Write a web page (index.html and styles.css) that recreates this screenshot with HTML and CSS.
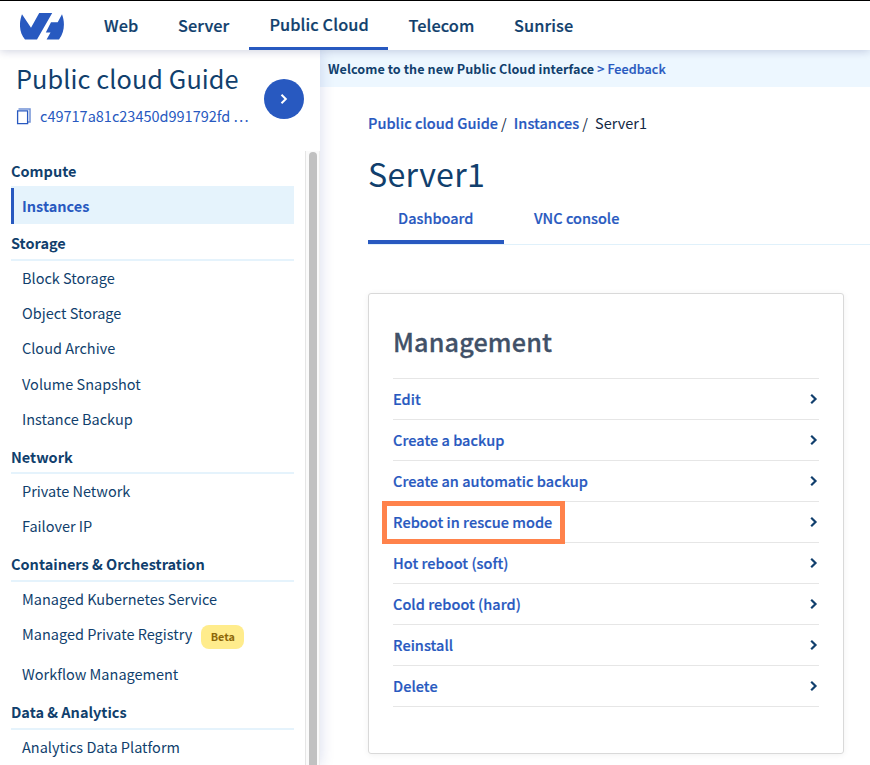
FILE: index.html
```html
<!DOCTYPE html>
<html lang="en">
<head>
<meta charset="utf-8">
<title>Public Cloud - Server1</title>
<link rel="stylesheet" href="styles.css">
</head>
<body>
<header class="topbar">
  <svg class="logo" viewBox="0 0 44 27" width="44" height="27"><path d="M2 1.2 L11 14.8 L19.2 0 H32.2 L17 26.5 H5 C-.8 20 -1.3 10 2 1.2Z"/><path d="M42 1.2 L37.7 9.3 H31 L25.8 19.5 H30.5 L26.6 26.5 H39 C44.8 19 45 9 42 1.2Z"/></svg>
  <nav class="topnav">
    <a class="topnav-link web">Web</a>
    <a class="topnav-link server">Server</a>
    <a class="topnav-link cloud active">Public Cloud</a>
    <a class="topnav-link telecom">Telecom</a>
    <a class="topnav-link sunrise">Sunrise</a>
  </nav>
</header>
<div class="layout">
  <aside class="sidebar">
    <div class="project">
      <div class="project-info">
        <h2 class="project-name">Public cloud Guide</h2>
        <div class="project-id">
          <svg width="15" height="17" viewBox="0 0 15 17"><path class="copy-back" d="M2.5 1H14V14H12"/><path class="copy-front" d="M1.6 2.8H11.6V15.7H1.6Z"/></svg>
          <span>c49717a81c23450d991792fd&thinsp;…</span>
        </div>
      </div>
      <button class="round-btn" aria-label="Expand"><svg width="8" height="10" viewBox="0 0 8 10"><path d="M1.5 .8L5.8 5L1.5 9.2"/></svg></button>
    </div>
    <div class="menu-wrap">
      <nav class="menu">
        <h3 class="low">Compute</h3>
        <a class="selected">Instances</a>
        <h3>Storage</h3>
        <a>Block Storage</a>
        <a>Object Storage</a>
        <a>Cloud Archive</a>
        <a>Volume Snapshot</a>
        <a>Instance Backup</a>
        <h3 class="low">Network</h3>
        <a>Private Network</a>
        <a>Failover IP</a>
        <h3 class="low">Containers &amp; Orchestration</h3>
        <a>Managed Kubernetes Service</a>
        <a class="with-badge">Managed Private Registry<span class="badge">Beta</span></a>
        <a>Workflow Management</a>
        <h3 class="low">Data &amp; Analytics</h3>
        <a>Analytics Data Platform</a>
      </nav>
      <div class="scroll"><div class="thumb"></div></div>
    </div>
  </aside>
  <main class="main">
    <div class="banner"><b>Welcome to the new Public Cloud interface</b><a>&gt; Feedback</a></div>
    <div class="content">
      <div class="crumbs"><a>Public cloud Guide</a><i>/</i><a>Instances</a><i>/</i><span>Server1</span></div>
      <h1>Server1</h1>
      <div class="tabs"><a class="tab current">Dashboard</a><a class="tab">VNC console</a></div>
      <section class="card">
        <h2>Management</h2>
        <ul class="actions">
          <li><a>Edit</a><svg width="8" height="10" viewBox="0 0 8 10"><path d="M1.2 .8L5.5 5L1.2 9.2"/></svg></li>
          <li><a>Create a backup</a><svg width="8" height="10" viewBox="0 0 8 10"><path d="M1.2 .8L5.5 5L1.2 9.2"/></svg></li>
          <li><a>Create an automatic backup</a><svg width="8" height="10" viewBox="0 0 8 10"><path d="M1.2 .8L5.5 5L1.2 9.2"/></svg></li>
          <li class="marked"><a>Reboot in rescue mode</a><svg width="8" height="10" viewBox="0 0 8 10"><path d="M1.2 .8L5.5 5L1.2 9.2"/></svg></li>
          <li><a>Hot reboot (soft)</a><svg width="8" height="10" viewBox="0 0 8 10"><path d="M1.2 .8L5.5 5L1.2 9.2"/></svg></li>
          <li><a>Cold reboot (hard)</a><svg width="8" height="10" viewBox="0 0 8 10"><path d="M1.2 .8L5.5 5L1.2 9.2"/></svg></li>
          <li><a>Reinstall</a><svg width="8" height="10" viewBox="0 0 8 10"><path d="M1.2 .8L5.5 5L1.2 9.2"/></svg></li>
          <li><a>Delete</a><svg width="8" height="10" viewBox="0 0 8 10"><path d="M1.2 .8L5.5 5L1.2 9.2"/></svg></li>
        </ul>
      </section>
    </div>
  </main>
</div>
</body>
</html>
```
FILE: styles.css
```css
*, *::after { box-sizing: border-box; }
body {
  margin: 0;
  height: 765px;
  overflow: hidden;
  display: flex;
  flex-direction: column;
  background: #fff;
  color: #113f6d;
  font-family: "Noto Sans CJK SC", "Noto Sans", sans-serif;
  font-size: 14.5px;
  white-space: nowrap;
}
h1, h2, h3, ul { margin: 0; padding: 0; }
.topbar {
  position: relative;
  z-index: 2;
  flex: none;
  height: 50px;
  border-top: 1px solid #000;
  display: flex;
  background: #fff;
  box-shadow: 0 1px 9px rgba(0, 20, 90, .2);
}
.logo { margin: 12px 0 0 20px; fill: #2859c0; }
.topnav { display: flex; margin-left: 25px; }
.topnav-link {
  height: 49px;
  padding: 0 15px;
  line-height: 49px;
  font-size: 16.3px;
  font-weight: 500;
  letter-spacing: .1px;
  -webkit-text-stroke: .2px;
}
.web { width: 74px; }
.server { width: 86px; }
.cloud { width: 139px; padding-left: 20.4px; }
.telecom { width: 111px; padding-left: 20.4px; }
.topnav-link.active { border-bottom: 3px solid #2859c0; line-height: 47px; }
.layout { flex: 1; display: flex; min-height: 0; }
.sidebar {
  position: relative;
  z-index: 1;
  width: 320px;
  flex: none;
  display: flex;
  flex-direction: column;
  background: #fff;
  box-shadow: 0 0 14px rgba(0, 30, 140, .16);
}
.project {
  flex: none;
  height: 101px;
  padding: 8px 16px 0;
  display: flex;
  justify-content: space-between;
}
.project-name {
  height: 43px;
  line-height: 41px;
  font-size: 25.3px;
  font-weight: 400;
  letter-spacing: .08px;
}
.project-id {
  height: 30px;
  display: flex;
  align-items: center;
  gap: 9px;
  color: #2859c0;
  line-height: 30px;
}
.project-id svg { fill: none; stroke: #2859c0; }
.copy-back { opacity: .65; stroke-width: 1.5; }
.copy-front { stroke-width: 1.3; }
.round-btn {
  width: 40px;
  height: 40px;
  margin: 21px 0 0;
  padding: 0;
  border: 0;
  border-radius: 50%;
  background: #2859c0;
  display: flex;
  align-items: center;
  justify-content: center;
}
.round-btn svg { fill: none; stroke: #fff; stroke-width: 2; }
.menu-wrap { flex: 1; min-height: 0; display: flex; justify-content: space-between; }
.menu { width: 294px; padding-left: 11px; }
.menu h3 {
  height: 37.2px;
  padding-top: 4px;
  border-bottom: 2px solid #e5f3fc;
  font-size: 14.5px;
  line-height: 29px;
  font-weight: 700;
}
.menu .low { padding-top: 5px; }
.menu a {
  display: flex;
  height: 35.2px;
  padding-left: 11px;
  line-height: 34px;
}
.menu .selected {
  height: 35.6px;
  padding-left: 8px;
  border-left: 3px solid #2859c0;
  background: #e5f3fc;
  color: #2859c0;
  font-weight: 700;
  line-height: 36px;
}
.menu .with-badge { height: 40.4px; }
.badge {
  width: 43px;
  height: 24px;
  margin: 8px 0 0 9px;
  border-radius: 8px;
  background: #ffec8c;
  color: #8d6708;
  text-align: center;
  font-size: 10.8px;
  font-weight: 700;
  line-height: 23px;
}
.scroll { width: 15px; border-left: 1px solid #e5e5e5; border-right: 1px solid #ededed; background: #fafafa; display: flex; padding: 1px 0 0 3px; }
.thumb { width: 8px; background: #c1c1c1; border-radius: 4px 4px 0 0; }
.main { flex: 1; min-width: 0; }
.banner {
  height: 37px;
  padding: 0 8px;
  background: #edf7ff;
  font-size: 12.6px;
  line-height: 37px;
  letter-spacing: .06px;
  display: flex;
  gap: 3px;
}
.banner a { color: #2859c0; font-weight: 500; -webkit-text-stroke: .2px; }
.content { padding: 21px 0 0 48px; }
.crumbs { display: flex; height: 30px; line-height: 30px; color: #122844; }
.crumbs a { color: #2859c0; font-weight: 500; letter-spacing: .03px; -webkit-text-stroke: .2px; }
.crumbs i { font-style: normal; margin: 0 7px 0 3px; }
h1 { height: 58px; margin-top: 8px; line-height: 54px; font-size: 32.2px; font-weight: 400; letter-spacing: .25px; }
.tabs { display: flex; height: 41px; border-bottom: 1px solid #e0f1fb; }
.tab { height: 40px; padding: 0 30px; line-height: 28px; color: #2859c0; font-weight: 500; -webkit-text-stroke: .2px; }
.current { width: 136px; border-bottom: 4px solid #2859c0; }
.card {
  width: 476px;
  height: 461px;
  margin-top: 48px;
  padding: 24px;
  border: 1px solid #d9d9d9;
  border-radius: 3px;
  box-shadow: 0 1px 6px rgba(0, 0, 0, .06);
}
.card h2 { height: 60px; line-height: 46px; font-size: 25.2px; font-weight: 500; letter-spacing: .15px; color: #415168; -webkit-text-stroke: .3px; }
.actions { list-style: none; border-top: 1px solid #e6e6e6; }
.actions li {
  position: relative;
  height: 41px;
  border-bottom: 1px solid #e6e6e6;
  display: flex;
  align-items: center;
  justify-content: space-between;
  color: #2859c0;
  font-weight: 500;
  letter-spacing: .04px;
}
.actions a { height: 40px; line-height: 40px; -webkit-text-stroke: .2px; }
.actions svg { margin-right: 1px; fill: none; stroke: #113f6d; stroke-width: 2.2; }
.marked::after {
  content: "";
  position: absolute;
  left: -11px;
  top: -1px;
  width: 183px;
  height: 43px;
  border: 5px solid #ff824b;
}
```
